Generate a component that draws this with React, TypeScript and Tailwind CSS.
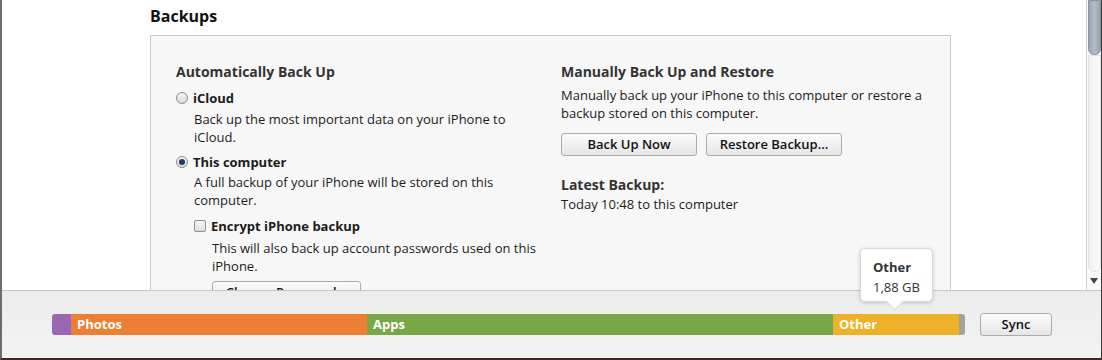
import React from "react";

const font = { fontFamily: '"Open Sans", "Noto Sans", Arial, sans-serif' };

function Radio({ checked }: { checked?: boolean }) {
  return (
    <span className="w-[12px] h-[12px] rounded-full border border-[#8c8c8c] bg-gradient-to-b from-[#f4f4f4] to-[#dcdcdc] flex items-center justify-center shrink-0">
      {checked && <span className="w-[6px] h-[6px] rounded-full bg-[#1f3b63]" />}
    </span>
  );
}

function Checkbox() {
  return (
    <span className="w-[12px] h-[12px] rounded-[2px] border border-[#8e8e8e] bg-gradient-to-b from-[#f2f2f2] to-[#e0e0e0] shrink-0" />
  );
}

function Btn({ children, className = "" }: { children: React.ReactNode; className?: string }) {
  return (
    <button
      type="button"
      className={`h-[23px] rounded-[3px] border border-[#acacac] bg-gradient-to-b from-[#fbfbfb] to-[#e6e6e6] text-[13px] font-semibold text-[#111] flex items-center justify-center leading-none ${className}`}
    >
      {children}
    </button>
  );
}

const segments = [
  { label: "", width: 19, color: "bg-[#9a67b2]" },
  { label: "Photos", width: 296, color: "bg-[#ec7f33]" },
  { label: "Apps", width: 466, color: "bg-[#78a747]" },
  { label: "Other", width: 126, color: "bg-[#eeb22a]" },
  { label: "", width: 3, color: "bg-[#a2a2a2]" },
];

export default function App() {
  return (
    <div
      className="w-[1102px] h-[360px] relative overflow-hidden bg-white flex flex-col border-l-2 border-l-[#6c6c6c] border-r border-r-[#3a3a3a] border-b-2 border-b-[#3b2a22] text-[#1c1c1c]"
      style={font}
    >
      <div className="flex-1 flex min-h-0">
        <div className="flex-1 min-w-0 overflow-hidden pl-[148px] pt-[5px]">
          <h2 className="text-[16px] font-bold leading-[22px] text-[#111]">Backups</h2>
          <div className="mt-[8px] w-[801px] h-[300px] border border-[#c9c9c9] bg-[#f7f7f7] flex pl-[25px] pt-[26px]">
            <div className="w-[385px] flex flex-col text-[13px] leading-[18px]">
              <div className="text-[14px] font-bold text-[#333] leading-[20px]">Automatically Back Up</div>
              <div className="mt-[7px] flex items-center gap-[5px]">
                <Radio />
                <span className="font-bold">iCloud</span>
              </div>
              <div className="pl-[18px] mt-[3px]">
                Back up the most important data on your iPhone to
                <br />
                iCloud.
              </div>
              <div className="mt-[7px] flex items-center gap-[5px]">
                <Radio checked />
                <span className="font-bold">This computer</span>
              </div>
              <div className="pl-[18px] mt-[2px]">
                A full backup of your iPhone will be stored on this
                <br />
                computer.
              </div>
              <div className="pl-[18px] mt-[8px] flex items-center gap-[5px]">
                <Checkbox />
                <span className="font-bold">Encrypt iPhone backup</span>
              </div>
              <div className="pl-[36px] mt-[4px]">
                This will also back up account passwords used on this
                <br />
                iPhone.
              </div>
              <div className="pl-[36px] mt-[6px]">
                <Btn className="w-[149px]">Change Password...</Btn>
              </div>
            </div>
            <div className="flex flex-col text-[13px] leading-[18px]">
              <div className="text-[14px] font-bold text-[#333] leading-[20px]">Manually Back Up and Restore</div>
              <div className="mt-[4px]">
                Manually back up your iPhone to this computer or restore a
                <br />
                backup stored on this computer.
              </div>
              <div className="mt-[11px] flex gap-[9px]">
                <Btn className="w-[136px]">Back Up Now</Btn>
                <Btn className="w-[136px]">Restore Backup...</Btn>
              </div>
              <div className="mt-[19px] text-[14px] font-bold text-[#333] leading-[20px]">Latest Backup:</div>
              <div>Today 10:48 to this computer</div>
            </div>
          </div>
        </div>
        <div className="w-[15px] border-l border-[#d4d4d4] bg-[#fafafa] flex flex-col items-center">
          <div className="w-[13px] h-[55px] rounded-b-[6px] bg-gradient-to-r from-[#9aa4b4] via-[#b4bccb] to-[#98a2b2] border border-[#8a93a3]" />
          <div className="flex-1 w-[13px] rounded-b-[6px] bg-gradient-to-r from-[#f0f0f0] to-[#fbfbfb] border border-[#e2e2e2]" />
          <div className="h-[18px] flex items-center">
            <svg width="8" height="6" viewBox="0 0 8 6">
              <path d="M0 0 L8 0 L4 6 Z" fill="#444" />
            </svg>
          </div>
        </div>
      </div>
      <div className="h-[68px] shrink-0 border-t border-[#c6c6c6] bg-gradient-to-b from-[#ececec] to-[#f3f3f3] flex items-center pl-[50px]">
        <div className="flex h-[21px] rounded-[3px] overflow-hidden shadow-[inset_0_0_0_1px_rgba(0,0,0,0.08)]">
          {segments.map((s, i) => (
            <div
              key={i}
              className={`${s.color} h-full flex items-center pl-[6px] text-[13px] font-bold text-white leading-none`}
              style={{ width: s.width }}
            >
              {s.label}
            </div>
          ))}
        </div>
        <Btn className="ml-[15px] w-[72px]">Sync</Btn>
      </div>
      <div className="absolute left-[858px] top-[248px] w-[73px] h-[54px] bg-white rounded-[5px] border border-[#d8d8d8] shadow-[0_1px_4px_rgba(0,0,0,0.18)] pl-[12px] pt-[8px] text-[13px] leading-[20px]">
        <div className="font-bold text-[#333]">Other</div>
        <div className="text-[#333]">1,88 GB</div>
        <div className="absolute left-[28px] bottom-[-7px] w-[12px] h-[12px] bg-white rotate-45 border-r border-b border-[#d8d8d8]" />
      </div>
    </div>
  );
}
